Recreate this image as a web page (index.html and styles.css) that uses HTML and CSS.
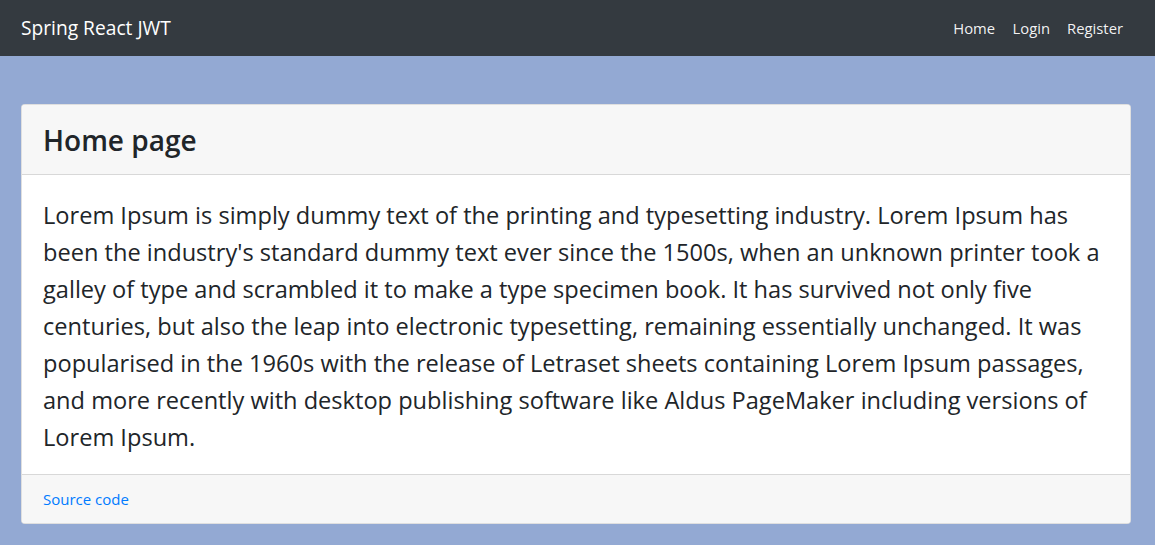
FILE: index.html
```html
<!DOCTYPE html>
<html lang="en">
<head>
<meta charset="utf-8">
<title>Spring React JWT</title>
<link rel="stylesheet" href="styles.css">
</head>
<body>
<nav class="navbar">
  <a class="brand" href="#">Spring React JWT</a>
  <ul class="nav">
    <li><a class="nav-link" href="#">Home</a></li>
    <li><a class="nav-link" href="#">Login</a></li>
    <li><a class="nav-link" href="#">Register</a></li>
  </ul>
</nav>
<main class="page">
  <section class="card">
    <header class="card-header">
      <h3 class="card-title">Home page</h3>
    </header>
    <div class="card-body">
      <p class="lead">Lorem Ipsum is simply dummy text of the printing and typesetting industry. Lorem Ipsum has been the industry's standard dummy text ever since the 1500s, when an unknown printer took a galley of type and scrambled it to make a type specimen book. It has survived not only five centuries, but also the leap into electronic typesetting, remaining essentially unchanged. It was popularised in the 1960s with the release of Letraset sheets containing Lorem Ipsum passages, and more recently with desktop publishing software like Aldus PageMaker including versions of Lorem Ipsum.</p>
    </div>
    <footer class="card-footer">
      <a class="source-link" href="#">Source code</a>
    </footer>
  </section>
</main>
</body>
</html>
```
FILE: styles.css
```css
* { box-sizing: border-box; }

html, body {
  margin: 0;
  padding: 0;
}

body {
  background: #93a9d3;
  font-family: "Open Sans", "Noto Sans", sans-serif;
  color: #212529;
  min-height: 545px;
}

.navbar {
  display: flex;
  align-items: center;
  justify-content: space-between;
  height: 56px;
  padding: 0 24px 0 21px;
  background: #343a40;
}

.brand {
  color: #fff;
  text-decoration: none;
  font-size: 19.2px;
  line-height: 56px;
  white-space: nowrap;
}

.nav {
  display: flex;
  list-style: none;
  margin: 0;
  padding: 0;
}

.nav-link {
  display: block;
  padding: 0 8.5px;
  color: rgba(255, 255, 255, 0.95);
  text-decoration: none;
  font-size: 14.8px;
  line-height: 56px;
}

.nav li:first-child .nav-link {
  padding-right: 9px;
}

.nav li:last-child .nav-link {
  padding-right: 8px;
}

.page {
  padding: 48px 24px 21px 21px;
}

.card {
  display: flex;
  flex-direction: column;
  background: #fff;
  border: 1px solid rgba(0, 0, 0, 0.125);
  border-radius: 4px;
  overflow: hidden;
}

.card-header {
  padding: 18px 21px 17px;
  background: #f7f7f7;
  border-bottom: 1px solid rgba(0, 0, 0, 0.125);
}

.card-title {
  margin: 0;
  font-size: 28px;
  font-weight: 600;
  line-height: 34px;
  color: #212529;
}

.card-body {
  padding: 22px 21px 18px 21px;
}

.lead {
  margin: 0;
  font-size: 23.6px;
  line-height: 37px;
}

.card-footer {
  padding: 12px 21px;
  background: #f7f7f7;
  border-top: 1px solid rgba(0, 0, 0, 0.125);
}

.source-link {
  color: #007bff;
  text-decoration: none;
  font-size: 15px;
  line-height: 24px;
}
```
